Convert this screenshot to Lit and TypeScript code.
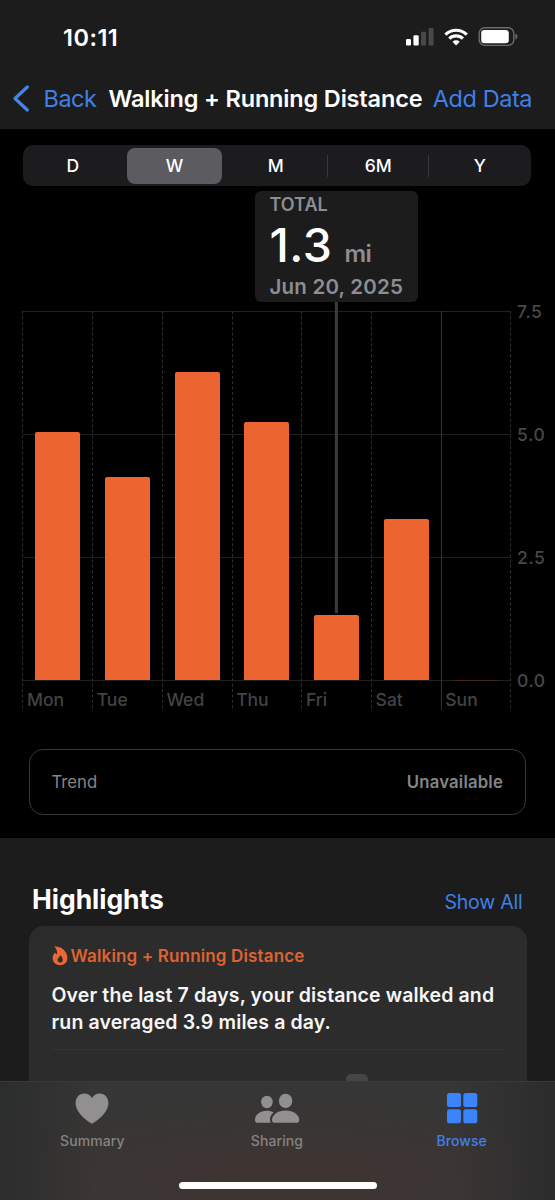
import { LitElement, html, css, svg } from "lit";
import { customElement } from "lit/decorators.js";

const MAX = 7.5;
const DAYS = [
  { name: "Mon", miles: 5.04 },
  { name: "Tue", miles: 4.13 },
  { name: "Wed", miles: 6.27 },
  { name: "Thu", miles: 5.25 },
  { name: "Fri", miles: 1.32 },
  { name: "Sat", miles: 3.28 },
  { name: "Sun", miles: 0.01 },
];

@customElement("status-bar")
class StatusBar extends LitElement {
  static styles = css`
    :host { display: flex; justify-content: space-between; align-items: center; height: 74px; padding: 0 37px 0 63px; }
    .time { font-size: 23.5px; font-weight: 600; letter-spacing: 0.5px; }
    .icons { display: block; }
  `;
  render() {
    return html`
      <span class="time">10:11</span>
      <svg class="icons" width="112" height="20" viewBox="406 27 112 20">
        <rect x="406" y="39" width="5" height="6.6" rx="1.3" fill="#fff" />
        <rect x="413.4" y="35.3" width="5.3" height="10.3" rx="1.3" fill="#fff" />
        <rect x="421" y="31.8" width="5" height="13.8" rx="1.3" fill="#48484a" />
        <rect x="428.6" y="28" width="5" height="17.6" rx="1.3" fill="#48484a" />
        <g fill="none" stroke="#fff" stroke-width="3.1">
          <path d="M445.4 34.6a15.4 15.4 0 0 1 21.4 0" />
          <path d="M449.3 38.6a9.8 9.8 0 0 1 13.6 0" />
        </g>
        <path d="M456.1 45.5l-3.6-3.7a5.2 5.2 0 0 1 7.2 0z" fill="#fff" />
        <rect x="479.2" y="27.8" width="34.6" height="17.6" rx="5.4" fill="none" stroke="#6c6c6c" stroke-width="1.4" />
        <rect x="481.2" y="30" width="27.6" height="13.2" rx="3.2" fill="#fff" />
        <path d="M515.4 33.6c2.6 1 2.6 5 0 6z" fill="#6c6c6c" />
      </svg>
    `;
  }
}

@customElement("nav-bar")
class NavBar extends LitElement {
  static styles = css`
    :host { display: flex; align-items: center; height: 49px; padding: 0 23px 0 12.5px; font-size: 23.5px; white-space: nowrap; }
    .blue { color: #3f80e8; }
    .chevron { flex: none; margin-right: 14px; }
    .back { width: 65px; letter-spacing: -0.5px; }
    .title { flex: 1; font-weight: 600; letter-spacing: -0.16px; }
    .add { letter-spacing: -0.45px; }
  `;
  render() {
    return html`
      <svg class="chevron" width="17" height="27" viewBox="0 0 17 27">
        <path d="M14.3 2L2 13.5L14.3 25" fill="none" stroke="#4384ee" stroke-width="3.2" stroke-linecap="round" stroke-linejoin="round" />
      </svg>
      <span class="blue back">Back</span>
      <span class="title">Walking + Running Distance</span>
      <span class="blue add">Add Data</span>
    `;
  }
}

@customElement("range-picker")
class RangePicker extends LitElement {
  static styles = css`
    :host { display: grid; grid-template-columns: repeat(5, 1fr); align-items: center; height: 41px; margin: 16px 24.5px 0 23px; background: #1c1c1e; border-radius: 10px; font-size: 17.5px; font-weight: 500; }
    .seg { display: flex; align-items: center; justify-content: center; height: 22px; margin-left: -2px; }
    .on { height: 36px; margin: 0 4px 0 2.5px; background: #5b5b60; border-radius: 8px; }
    .line { margin-left: -1px; border-left: 1px solid #39393b; }
  `;
  render() {
    return html`
      <div class="seg">D</div>
      <div class="seg on">W</div>
      <div class="seg">M</div>
      <div class="seg line">6M</div>
      <div class="seg line">Y</div>
    `;
  }
}

@customElement("distance-chart")
class DistanceChart extends LitElement {
  static styles = css`
    :host { display: block; padding-left: 23px; }
    .callout { box-sizing: border-box; width: 163px; height: 111px; margin: 5px 0 0 232px; padding: 4px 0 0 14.5px; background: #1c1c1d; border-radius: 6px; color: #8d8d92; font-weight: 600; white-space: nowrap; }
    .cap { height: 19px; line-height: 19px; font-size: 18px; letter-spacing: 0; }
    .value { display: flex; align-items: baseline; height: 60px; line-height: 62px; }
    .num { width: 75px; font-size: 46.5px; font-weight: 500; color: #fff; letter-spacing: 0.5px; }
    .unit { font-size: 24px; letter-spacing: -0.6px; }
    .date { height: 25px; line-height: 25px; font-size: 20.5px; letter-spacing: 0.2px; }
    .body { display: flex; }
    .stack { display: grid; width: 489px; height: 409px; }
    .layer { grid-area: 1 / 1; }
    .grid { overflow: visible; }
    .bars { display: grid; grid-template-columns: repeat(7, 69.72px); align-items: end; height: 369px; margin-top: 9px; }
    .bar { margin: 0 12.6px 0 12.2px; background: #ec6430; border-radius: 2px 2px 0 0; }
    .faint { margin-bottom: -1px; background: #4a251b; border-radius: 0; }
    .days { display: grid; grid-template-columns: repeat(7, 69.72px); align-self: end; height: 22px; line-height: 21px; }
    .day { padding-left: 4px; font-size: 17.5px; font-weight: 500; color: #434345; }
    .axis { display: flex; flex-direction: column; justify-content: space-between; height: 389px; margin-left: 5px; font-size: 17.5px; font-weight: 500; color: #48484a; line-height: 20px; letter-spacing: 0.6px; }
  `;
  render() {
    const xs = [-0.5, 69.5, 139.5, 209.5, 278.5, 348.5, 487.5];
    return html`
      <div class="callout">
        <div class="cap">TOTAL</div>
        <div class="value"><span class="num">1.3</span><span class="unit">mi</span></div>
        <div class="date">Jun 20, 2025</div>
      </div>
      <div class="body">
        <div class="stack">
          <svg class="layer grid" width="489" height="409" viewBox="0 0 489 409">
            ${[9.5, 132.5, 255.5, 378.5].map((y) => svg`<path d="M0 ${y}H488" stroke="#202020" />`)}
            ${xs.map((x) => svg`<path d="M${x} 9V409" stroke="#2e2e2e" stroke-dasharray="3 2.4" />`)}
            <path d="M418.4 9V408" stroke="#363636" />
            <path d="M313.4 0V311" stroke="#3c3c3c" stroke-width="3" />
          </svg>
          <div class="layer bars">
            ${DAYS.map((d) => html`<div class="bar ${d.miles < 0.1 ? "faint" : ""}" style="height:${Math.max(1, (d.miles / MAX) * 369)}px"></div>`)}
          </div>
          <div class="layer days">${DAYS.map((d) => html`<span class="day">${d.name}</span>`)}</div>
        </div>
        <div class="axis"><span>7.5</span><span>5.0</span><span>2.5</span><span>0.0</span></div>
      </div>
    `;
  }
}

@customElement("trend-row")
class TrendRow extends LitElement {
  static styles = css`
    :host { box-sizing: border-box; display: flex; align-items: center; justify-content: space-between; height: 66px; margin: 38px 29px 0 28.5px; padding: 0 22px; border: 1.5px solid #383838; border-radius: 14px; font-size: 16.7px; color: #858585; }
    .state { font-weight: 600; letter-spacing: 0.2px; }
  `;
  render() {
    return html`<span>Trend</span><span class="state">Unavailable</span>`;
  }
}

@customElement("highlights-section")
class HighlightsSection extends LitElement {
  static styles = css`
    :host { box-sizing: border-box; display: block; height: 243px; padding: 44px 28.5px 0; background: #1c1c1c; overflow: hidden; }
    .head { display: flex; justify-content: space-between; height: 44px; padding: 0 4px 0 3.5px; line-height: 35px; white-space: nowrap; }
    .h { font-size: 26.5px; font-weight: 700; letter-spacing: -0.03px; }
    .all { padding-top: 3px; font-size: 19.5px; letter-spacing: -0.2px; color: #3f80e8; }
    .card { box-sizing: border-box; height: 180px; padding: 18.5px 22.5px 0 23px; background: #2c2c2c; border-radius: 15px 15px 0 0; }
    .topic { display: flex; align-items: center; gap: 3px; height: 23px; color: #df6332; font-size: 17px; font-weight: 600; letter-spacing: 0.15px; white-space: nowrap; }
    .text { margin-top: 14.5px; line-height: 27px; font-size: 19.5px; font-weight: 600; letter-spacing: 0.12px; color: #f6f6f6; white-space: nowrap; }
    .rule { height: 1px; margin-top: 13px; background: #343434; }
    .mini { width: 22px; height: 20px; margin: 24px 0 0 294px; background: #464646; border-radius: 5px; }
  `;
  render() {
    return html`
      <div class="head"><span class="h">Highlights</span><span class="all">Show All</span></div>
      <div class="card">
        <div class="topic">
          <svg width="16" height="20" viewBox="0 0 16 20">
            <path fill="#ec6733" fill-rule="evenodd" d="M2.2.6C9 .1 15.400 5 15.400 12C15.400 16.400 12.300 19.200 8.200 19.200C3.900 19.200.7 16.400.7 12.300C.7 9.900 1.600 7.900 3.100 6.500C3.500 7.500 4.100 8.100 4.900 8.300C5.500 5.500 4.600 2.800 2.200.6ZM8.200 9C8.300 11 5.600 11.700 5.600 14C5.600 15.600 6.700 16.500 8.100 16.500C9.600 16.500 10.700 15.500 10.700 13.900C10.700 11.800 9.600 10.200 8.200 9Z" />
          </svg>
          <span class="label">Walking + Running Distance</span>
        </div>
        <div class="text">Over the last 7 days, your distance walked and<br />run averaged 3.9 miles a day.</div>
        <div class="rule"></div>
        <div class="mini"></div>
      </div>
    `;
  }
}

@customElement("tab-bar")
class TabBar extends LitElement {
  static styles = css`
    :host {
      box-sizing: border-box; display: flex; flex-direction: column; align-items: center; justify-content: space-between; height: 119px; padding: 9px 0 11px; border-top: 1px solid #3a3a3a;
      background:
        linear-gradient(90deg, rgba(43, 44, 44, 0.95), rgba(43, 44, 44, 0) 17%, rgba(43, 43, 44, 0) 82%, rgba(43, 43, 44, 0.95)),
        radial-gradient(ellipse 330px 75px at 52% 78%, #3f3432, rgba(63, 52, 50, 0)),
        linear-gradient(#353636, #393635);
    }
    .tabs { display: grid; grid-template-columns: repeat(3, 1fr); width: 100%; padding-right: 1px; box-sizing: border-box; }
    .tab { display: flex; flex-direction: column; align-items: center; font-size: 14px; font-weight: 500; line-height: 18px; color: #858383; letter-spacing: 0.1px; }
    .icon { display: block; margin-bottom: 6px; }
    .on { color: #3f80e8; }
    .home { width: 198px; height: 7.5px; border-radius: 4px; background: #fff; }
  `;
  render() {
    return html`
      <div class="tabs">
        <div class="tab">
          <svg class="icon" width="46" height="35" viewBox="0 0 46 35">
            <path fill="#918f8f" d="M23 32.800C22 32.400 6.600 23.500 6.600 12.100C6.600 6.400 10.200 2.400 15.200 2.400C18.800 2.400 21.600 4.300 23 7C24.400 4.300 27.200 2.400 30.800 2.400C35.800 2.400 39.400 6.400 39.400 12.100C39.400 23.500 24 32.400 23 32.800Z" />
          </svg>
          Summary
        </div>
        <div class="tab">
          <svg class="icon" width="46" height="35" viewBox="0 0 46 35">
            <g fill="#918f8f">
              <ellipse cx="12.900" cy="11" rx="5.800" ry="6.200" />
              <path d="M1 28.800C1 23.700 6 19.700 12.900 19.700C15.500 19.700 17.800 20.300 19.600 21.400C17.200 23.200 15.900 25.900 16 28.400C16 30 16.300 31.200 17 31.700H3C1.700 31.700 1 30.600 1 28.800Z" />
              <ellipse cx="31.600" cy="9.900" rx="6.700" ry="7.200" />
              <path d="M18 28.800C18 23.600 24 19.400 31.600 19.400C39.200 19.400 45.200 23.600 45.200 28.800C45.200 30.800 44.500 31.700 43 31.700H20.200C18.700 31.700 18 30.800 18 28.800Z" />
            </g>
          </svg>
          Sharing
        </div>
        <div class="tab on">
          <svg class="icon" width="46" height="35" viewBox="0 0 46 35">
            <g fill="#3c84fb">
              <rect x="8" y="2" width="14" height="14" rx="2.600" />
              <rect x="24.300" y="2" width="14" height="14" rx="2.600" />
              <rect x="8" y="18.300" width="14" height="14" rx="2.600" />
              <rect x="24.300" y="18.300" width="14" height="14" rx="2.600" />
            </g>
          </svg>
          Browse
        </div>
      </div>
      <div class="home"></div>
    `;
  }
}

@customElement("app-root")
class AppRoot extends LitElement {
  static styles = css`
    :host { display: flex; flex-direction: column; width: 555px; height: 1200px; overflow: hidden; background: #000; color: #fff; font-family: Inter, "Liberation Sans", sans-serif; }
    .top { height: 129px; background: #1c1c1c; }
    .grow { flex: 1; }
  `;
  render() {
    return html`
      <div class="top"><status-bar></status-bar><nav-bar></nav-bar></div>
      <range-picker></range-picker>
      <distance-chart></distance-chart>
      <trend-row></trend-row>
      <div class="grow"></div>
      <highlights-section></highlights-section>
      <tab-bar></tab-bar>
    `;
  }
}
